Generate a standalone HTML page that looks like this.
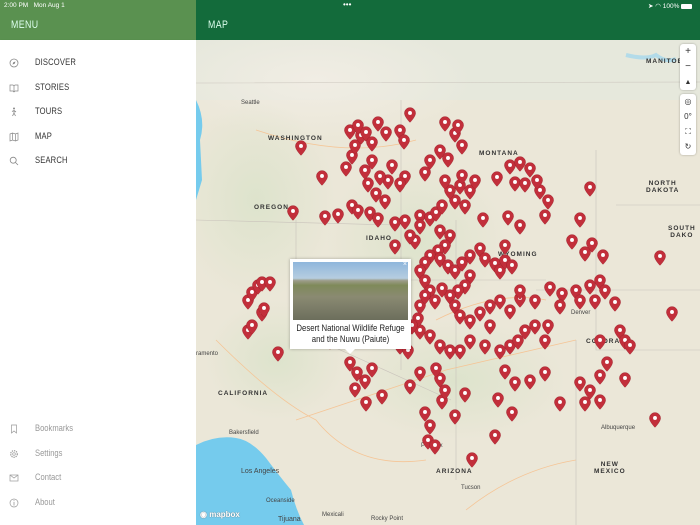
<!DOCTYPE html>
<html><head><meta charset="utf-8"><style>
*{margin:0;padding:0;box-sizing:border-box}
body{width:700px;height:525px;overflow:hidden;font-family:"Liberation Sans",sans-serif;position:relative;background:#fff}
.hl{position:absolute;left:0;top:0;width:196px;height:40px;background:#5a9150}
.hr{position:absolute;left:196px;top:0;width:504px;height:40px;background:#136b3b}
.st{position:absolute;top:2px;color:#fff;font-size:6.5px}
.ht{position:absolute;top:19px;color:#dfe;font-size:11px;letter-spacing:.5px;transform:scaleX(.8);transform-origin:left}
.side{position:absolute;left:0;top:40px;width:196px;height:485px;background:#fff;box-shadow:0 1px 2px rgba(0,0,0,.15)}
.it{position:absolute;left:35px;font-size:9.5px;color:#333;transform:scaleX(.8);transform-origin:left;letter-spacing:.2px}
.it2{position:absolute;left:35px;font-size:9.5px;color:#999;transform:scaleX(.8);transform-origin:left}
.ic{position:absolute;left:9px;width:10px;height:10px;margin-top:1px}
.map{position:absolute;left:196px;top:40px;width:504px;height:485px;overflow:hidden;background:#ebe7d8}
.lbl{position:absolute;font-size:6.5px;font-weight:bold;letter-spacing:1px;color:#333}
.c{position:absolute;font-size:6px;color:#444}
.pin{position:absolute;width:12px;height:16px}
.ctl{position:absolute;left:484px;width:16px;background:#fff;border-radius:3px;box-shadow:0 0 2px rgba(0,0,0,.3);font-size:10px;text-align:center;color:#333}
</style></head><body>
<div class="hl"></div><div class="hr"></div>
<div class="st" style="left:4px">2:00 PM&nbsp;&nbsp; Mon Aug 1</div>
<div class="st" style="left:343px;top:0px;font-size:8px">•••</div>
<div class="st" style="left:648px">➤ ◠ 100% <span style="display:inline-block;width:11px;height:5px;background:#fff;border-radius:1px;vertical-align:middle"></span></div>
<div class="ht" style="left:11px">MENU</div>
<div class="ht" style="left:208px">MAP</div>
<div class="side">
<svg class="ic" style="top:17px" viewBox="0 0 10 10"><circle cx="5" cy="5" r="4" fill="none" stroke="#888" stroke-width=".8"/><path d="M3.5 6.5L4.3 4.3 6.5 3.5 5.7 5.7Z" fill="#888"/></svg>
<div class="it" style="top:17px">DISCOVER</div>
<svg class="ic" style="top:42px" viewBox="0 0 10 10"><path d="M1 2h3l1 1 1-1h3v6H6L5 9 4 8H1Z M5 3v6" fill="none" stroke="#888" stroke-width=".7"/></svg>
<div class="it" style="top:42px">STORIES</div>
<svg class="ic" style="top:66px" viewBox="0 0 10 10"><circle cx="5" cy="1.5" r="1" fill="#888"/><path d="M5 3v3l-1.5 3M5 6l1.5 3M3 4.5l2-1 2 1.5" fill="none" stroke="#888" stroke-width=".8"/></svg>
<div class="it" style="top:66px">TOURS</div>
<svg class="ic" style="top:91px" viewBox="0 0 10 10"><path d="M1 2l2.5-1 3 1 2.5-1v7l-2.5 1-3-1L1 9Z M3.5 1v7M6.5 2v7" fill="none" stroke="#888" stroke-width=".7"/></svg>
<div class="it" style="top:91px">MAP</div>
<svg class="ic" style="top:115px" viewBox="0 0 10 10"><circle cx="4.2" cy="4.2" r="3" fill="none" stroke="#888" stroke-width=".8"/><path d="M6.5 6.5L9 9" stroke="#888" stroke-width=".8"/></svg>
<div class="it" style="top:115px">SEARCH</div>
<svg class="ic" style="top:383px" viewBox="0 0 10 10"><path d="M2.5 1h5v8L5 7 2.5 9Z" fill="none" stroke="#999" stroke-width=".7"/></svg>
<div class="it2" style="top:383px">Bookmarks</div>
<svg class="ic" style="top:408px" viewBox="0 0 10 10"><circle cx="5" cy="5" r="3.3" fill="none" stroke="#999" stroke-width="1.2" stroke-dasharray="1.3 .9"/><circle cx="5" cy="5" r="1.3" fill="none" stroke="#999" stroke-width=".7"/></svg>
<div class="it2" style="top:408px">Settings</div>
<svg class="ic" style="top:432px" viewBox="0 0 10 10"><rect x="1" y="2" width="8" height="6" fill="none" stroke="#999" stroke-width=".7"/><path d="M1 2l4 3 4-3" fill="none" stroke="#999" stroke-width=".7"/></svg>
<div class="it2" style="top:432px">Contact</div>
<svg class="ic" style="top:457px" viewBox="0 0 10 10"><circle cx="5" cy="5" r="4" fill="none" stroke="#999" stroke-width=".7"/><path d="M5 4v3.5" stroke="#999" stroke-width=".8"/><circle cx="5" cy="2.8" r=".5" fill="#999"/></svg>
<div class="it2" style="top:457px">About</div>
</div>
<div class="map" id="map">
<svg width="504" height="485" style="position:absolute;left:0;top:0">
<defs><radialGradient id="g1"><stop offset="0" stop-color="#dde3cc"/><stop offset="1" stop-color="#dde3cc" stop-opacity="0"/></radialGradient>
<radialGradient id="g2"><stop offset="0" stop-color="#f1ede4"/><stop offset="1" stop-color="#f1ede4" stop-opacity="0"/></radialGradient></defs>
<rect width="504" height="60" fill="#e6e8dc"/>
<ellipse cx="120" cy="40" rx="160" ry="60" fill="url(#g2)"/>
<ellipse cx="60" cy="160" rx="80" ry="100" fill="url(#g1)"/>
<ellipse cx="220" cy="200" rx="90" ry="80" fill="url(#g1)"/>
<ellipse cx="260" cy="340" rx="110" ry="60" fill="url(#g1)"/>
<ellipse cx="80" cy="320" rx="70" ry="60" fill="url(#g1)"/>
<path d="M0 60 Q10 80 4 100 L6 140 Q3 150 0 160Z" fill="#75cbed"/>
<path d="M0 405 Q20 395 40 398 Q55 400 70 418 Q85 438 95 450 Q100 470 108 485 L0 485Z" fill="#75cbed"/>
<path d="M20 300 Q80 360 120 380 Q160 430 230 420 M100 380 L250 330 L380 300 M270 470 Q320 430 380 420 M240 280 Q300 250 350 260 M60 90 Q150 120 220 100" fill="none" stroke="#f5c596" stroke-width=".8"/>
<path d="M0 43 L504 42 M205 60 L205 330 M0 180 L200 185 M100 180 L100 290 L255 360 M260 180 L260 440 M340 250 L504 250 M380 300 L380 485 M420 165 L504 165 M400 110 L400 310 L504 310 M200 240 L350 240" fill="none" stroke="#c9c3bb" stroke-width=".6"/>
<path d="M430 15 q20 5 30 0 q10 8 20 4" fill="none" stroke="#9dd5ee" stroke-width="4" opacity=".7"/>
</svg>
<div class="lbl" style="left:72px;top:95px">WASHINGTON</div>
<div class="lbl" style="left:58px;top:164px">OREGON</div>
<div class="lbl" style="left:170px;top:195px">IDAHO</div>
<div class="lbl" style="left:283px;top:110px">MONTANA</div>
<div class="lbl" style="left:302px;top:211px">WYOMING</div>
<div class="lbl" style="left:22px;top:350px">CALIFORNIA</div>
<div class="lbl" style="left:390px;top:298px">COLORADO</div>
<div class="lbl" style="left:240px;top:428px">ARIZONA</div>
<div class="lbl" style="left:398px;top:421px;text-align:center">NEW<br>MEXICO</div>
<div class="lbl" style="left:450px;top:140px;text-align:center">NORTH<br>DAKOTA</div>
<div class="lbl" style="left:472px;top:185px;text-align:center">SOUTH<br>DAKO</div>
<div class="lbl" style="left:450px;top:18px">MANITOBA</div>
<div class="c" style="left:33px;top:390px">Bakersfield</div>
<div class="c" style="left:45px;top:428px;font-size:7px">Los Angeles</div>
<div class="c" style="left:70px;top:458px">Oceanside</div>
<div class="c" style="left:82px;top:476px;font-size:7px">Tijuana</div>
<div class="c" style="left:126px;top:472px">Mexicali</div>
<div class="c" style="left:0px;top:311px">ramento</div>
<div class="c" style="left:45px;top:60px">Seattle</div>
<div class="c" style="left:265px;top:445px">Tucson</div>
<div class="c" style="left:225px;top:403px">Phoenix</div>
<div class="c" style="left:405px;top:385px">Albuquerque</div>
<div class="c" style="left:375px;top:270px">Denver</div>
<div class="c" style="left:175px;top:476px">Rocky Point</div>
<div style="position:absolute;left:4px;top:470px;color:#fff;font-size:8px;font-weight:bold;text-shadow:0 0 1px #555">◉ mapbox</div>
<div class="ctl" style="top:4px;height:46px;line-height:15px">+<br>−<br><span style="font-size:7px">▲</span></div>
<div class="ctl" style="top:54px;height:61px;line-height:15px;font-size:8px">◎<br>0°<br>⛶<br>↻</div>
</div>
<div style="position:absolute;left:290px;top:259px;width:121px;height:90px;background:#fff;box-shadow:0 0 3px rgba(0,0,0,.3);z-index:5">
<div style="position:absolute;left:3px;top:3px;width:115px;height:58px;background:linear-gradient(#8fb6dc 0,#b6cde0 28%,#9d9d8a 32%,#7f8a5a 40%,#8a8a72 60%,#6c6e5c 100%)"></div>
<div style="position:absolute;right:4px;top:2px;font-size:7px;color:#fff">×</div>
<div style="position:absolute;left:-6px;top:64px;width:133px;text-align:center;font-size:9.5px;line-height:11px;color:#222;transform:scaleX(.82)">Desert National Wildlife Refuge and the Nuwu (Paiute)</div>
<div style="position:absolute;left:55px;top:90px;border:5px solid transparent;border-top-color:#fff"></div>
</div>
<script>
var P=[[301,146],[322,176],[293,211],[325,216],[338,214],[352,205],[358,210],[346,167],[352,155],[355,145],[361,135],[350,130],[358,125],[378,122],[366,132],[372,142],[386,132],[400,130],[404,140],[410,113],[445,122],[455,133],[458,125],[462,145],[440,150],[448,158],[430,160],[425,172],[405,176],[400,183],[388,180],[380,176],[368,183],[365,170],[372,160],[392,165],[376,193],[385,200],[370,212],[378,218],[395,222],[405,220],[420,215],[430,217],[436,212],[442,205],[455,200],[465,205],[470,190],[460,185],[450,190],[445,180],[462,175],[475,180],[497,177],[510,165],[520,162],[530,168],[515,182],[525,183],[540,190],[537,180],[548,200],[590,187],[483,218],[508,216],[520,225],[545,215],[580,218],[572,240],[592,243],[603,255],[585,252],[660,256],[672,312],[440,230],[450,235],[445,245],[438,250],[430,255],[425,262],[420,270],[425,280],[430,290],[440,258],[448,265],[455,270],[462,262],[470,255],[480,248],[485,258],[495,263],[500,270],[505,260],[512,265],[505,245],[470,275],[465,285],[458,290],[450,295],[442,288],[435,300],[455,305],[460,315],[470,320],[480,312],[490,305],[500,300],[510,310],[520,298],[490,325],[485,345],[500,350],[510,345],[518,340],[525,330],[535,325],[545,340],[548,325],[470,340],[460,350],[450,350],[440,345],[430,335],[420,330],[418,318],[420,305],[425,295],[412,325],[403,290],[415,240],[410,235],[395,245],[420,225],[550,287],[562,293],[576,290],[590,285],[600,280],[605,290],[595,300],[580,300],[615,302],[560,305],[620,330],[625,340],[630,345],[607,362],[600,375],[625,378],[580,382],[590,390],[585,402],[600,400],[560,402],[545,372],[530,380],[515,382],[505,370],[498,398],[512,412],[495,435],[472,458],[465,393],[455,415],[442,400],[445,390],[440,378],[436,368],[425,412],[430,425],[428,440],[435,445],[420,372],[410,385],[382,395],[366,402],[365,380],[357,372],[350,362],[372,368],[355,388],[278,352],[248,330],[252,325],[262,312],[248,300],[252,292],[258,285],[262,282],[400,345],[408,350],[330,340],[655,418],[600,340],[520,290],[535,300],[270,282],[264,308]];
var h='';P.forEach(function(p){h+='<svg class="pin" style="left:'+(p[0]-196-6)+'px;top:'+(p[1]-40-6)+'px" viewBox="0 0 13 17"><path d="M6.5 0.5a6 6 0 0 1 6 6c0 4-6 10-6 10s-6-6-6-10a6 6 0 0 1 6-6z" fill="#c22f3b" stroke="#9e1f2a" stroke-width=".5"/><circle cx="6.5" cy="6.3" r="2.1" fill="#fff"/></svg>';});
document.getElementById('map').insertAdjacentHTML('beforeend',h);
</script>
</body></html>
